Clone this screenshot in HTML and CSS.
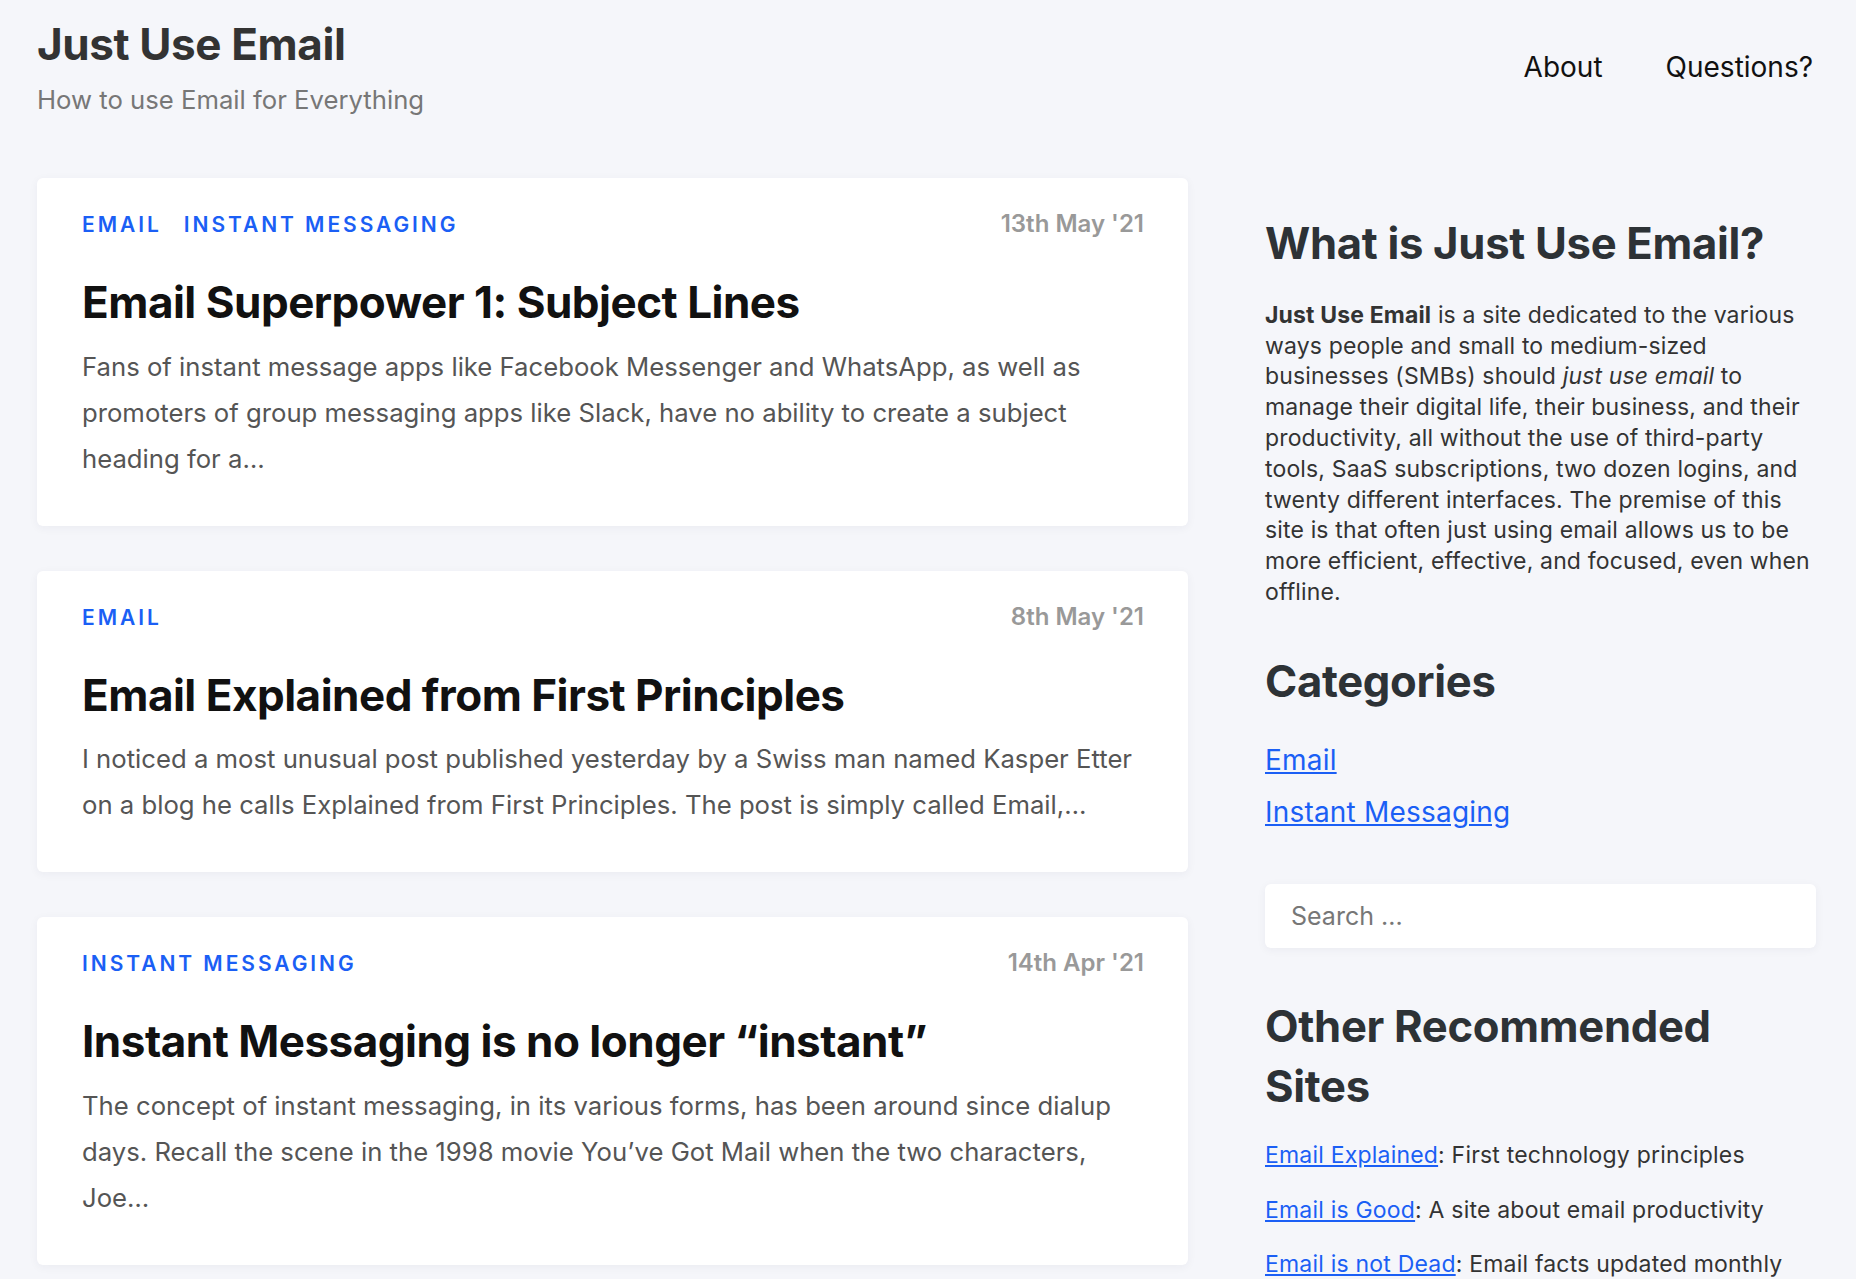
FILE: index.html
```html
<!DOCTYPE html>
<html lang="en">
<head>
    <meta charset="UTF-8">
    <meta name="viewport" content="width=device-width, initial-scale=1.0">
    <title>Just Use Email</title>
    <link rel="stylesheet" href="styles.css">
</head>
<body>
    <div class="page">
        <header class="site-header">
            <div class="brand">
                <h1 class="site-title">Just Use Email</h1>
                <p class="site-tagline">How to use Email for Everything</p>
            </div>
            <nav class="site-nav">
                <a href="#">About</a>
                <a href="#">Questions?</a>
            </nav>
        </header>

        <div class="layout">
            <main class="posts">
                <article class="post-card">
                    <div class="post-meta">
                        <div class="post-tags">
                            <a href="#">Email</a>
                            <a href="#">Instant Messaging</a>
                        </div>
                        <span class="post-date">13th May '21</span>
                    </div>
                    <h2 class="post-title">Email Superpower 1: Subject Lines</h2>
                    <p class="post-excerpt">Fans of instant message apps like Facebook Messenger and WhatsApp, as well as promoters of group messaging apps like Slack, have no ability to create a subject heading for a…</p>
                </article>

                <article class="post-card">
                    <div class="post-meta">
                        <div class="post-tags">
                            <a href="#">Email</a>
                        </div>
                        <span class="post-date">8th May '21</span>
                    </div>
                    <h2 class="post-title">Email Explained from First Principles</h2>
                    <p class="post-excerpt">I noticed a most unusual post published yesterday by a Swiss man named Kasper Etter on a blog he calls Explained from First Principles. The post is simply called Email,…</p>
                </article>

                <article class="post-card">
                    <div class="post-meta">
                        <div class="post-tags">
                            <a href="#">Instant Messaging</a>
                        </div>
                        <span class="post-date">14th Apr '21</span>
                    </div>
                    <h2 class="post-title">Instant Messaging is no longer “instant”</h2>
                    <p class="post-excerpt">The concept of instant messaging, in its various forms, has been around since dialup days. Recall the scene in the 1998 movie You’ve Got Mail when the two characters, Joe…</p>
                </article>
            </main>

            <aside class="sidebar">
                <section class="widget">
                    <h3 class="widget-title">What is Just Use Email?</h3>
                    <p class="about-text"><strong>Just Use Email</strong> is a site dedicated to the various ways people and small to medium-sized businesses (SMBs) should <em>just use email</em> to manage their digital life, their business, and their productivity, all without the use of third-party tools, SaaS subscriptions, two dozen logins, and twenty different interfaces. The premise of this site is that often just using email allows us to be more efficient, effective, and focused, even when offline.</p>
                </section>

                <section class="widget">
                    <h3 class="widget-title">Categories</h3>
                    <ul class="category-list">
                        <li><a href="#">Email</a></li>
                        <li><a href="#">Instant Messaging</a></li>
                    </ul>
                </section>

                <form class="search-form">
                    <input type="search" class="search-input" placeholder="Search ...">
                </form>

                <section class="widget">
                    <h3 class="widget-title">Other Recommended Sites</h3>
                    <ul class="site-list">
                        <li><a href="#">Email Explained</a>: First technology principles</li>
                        <li><a href="#">Email is Good</a>: A site about email productivity</li>
                        <li><a href="#">Email is not Dead</a>: Email facts updated monthly</li>
                    </ul>
                </section>
            </aside>
        </div>
    </div>
</body>
</html>
```

FILE: styles.css
```css
* { margin: 0; padding: 0; box-sizing: border-box; }
body { font-family: Inter, "Noto Sans", sans-serif; background: #f5f6fa; color: #333; }
a { color: #1b5ff5; }

.page { padding: 18px 40px 0 37px; }

/* header */
.site-header { display: flex; justify-content: space-between; align-items: flex-start; }
.site-title { font-size: 44px; line-height: 52.8px; font-weight: 700; color: #333; letter-spacing: -0.4px; }
.site-tagline { font-size: 25.7px; line-height: 36px; color: #777; margin-top: 11px; }
.site-nav { display: flex; gap: 63px; margin-top: 32px; padding-right: 3px; }
.site-nav a { font-size: 28px; line-height: 34px; color: #111; text-decoration: none; }

/* layout */
.layout { display: flex; gap: 77px; margin-top: 60px; align-items: flex-start; }
.posts { width: 1151px; flex-shrink: 0; display: flex; flex-direction: column; gap: 45px; }
.sidebar { flex: 1; padding-top: 36px; }

/* post cards */
.post-card { background: #fff; border-radius: 6px; padding: 33px 44px 44px 45px; box-shadow: 0 2px 10px rgba(30, 40, 80, 0.05); }
.post-meta { display: flex; justify-content: space-between; align-items: baseline; }
.post-tags { display: flex; gap: 22px; }
.post-tags a { font-size: 21px; line-height: 26px; font-weight: 600; text-transform: uppercase; letter-spacing: 0.14em; text-decoration: none; color: #1b5ff5; }
.post-date { font-size: 24px; line-height: 26px; font-weight: 600; color: #999; }
.post-title { font-size: 44px; line-height: 52.8px; font-weight: 700; color: #111; margin-top: 38px; letter-spacing: -0.5px; }
.post-excerpt { font-size: 25.7px; line-height: 46px; color: #555; margin-top: 15px; }

/* sidebar */
.widget-title { font-size: 43.6px; line-height: 60px; font-weight: 700; color: #2d3236; letter-spacing: -0.3px; }
.widget + .widget, .search-form + .widget { margin-top: 44px; }
.about-text { font-size: 23px; line-height: 30.8px; letter-spacing: 0.15px; color: #333; margin-top: 26px; }
.category-list { list-style: none; margin-top: 29px; }
.category-list li { font-size: 28px; line-height: 39px; letter-spacing: 0.2px; margin-bottom: 13px; }
.search-form { margin-top: 52px; }
.search-input { width: 100%; height: 64px; border: none; border-radius: 6px; background: #fff; padding: 0 26px; font-family: inherit; font-size: 25px; color: #333; box-shadow: 0 2px 10px rgba(30, 40, 80, 0.05); outline: none; }
.search-input::placeholder { color: #777; }
.search-form + .widget { margin-top: 49px; }
.site-list { list-style: none; margin-top: 23px; }
.site-list li { font-size: 23px; line-height: 30.8px; letter-spacing: 0.2px; color: #333; margin-bottom: 24px; }
```
